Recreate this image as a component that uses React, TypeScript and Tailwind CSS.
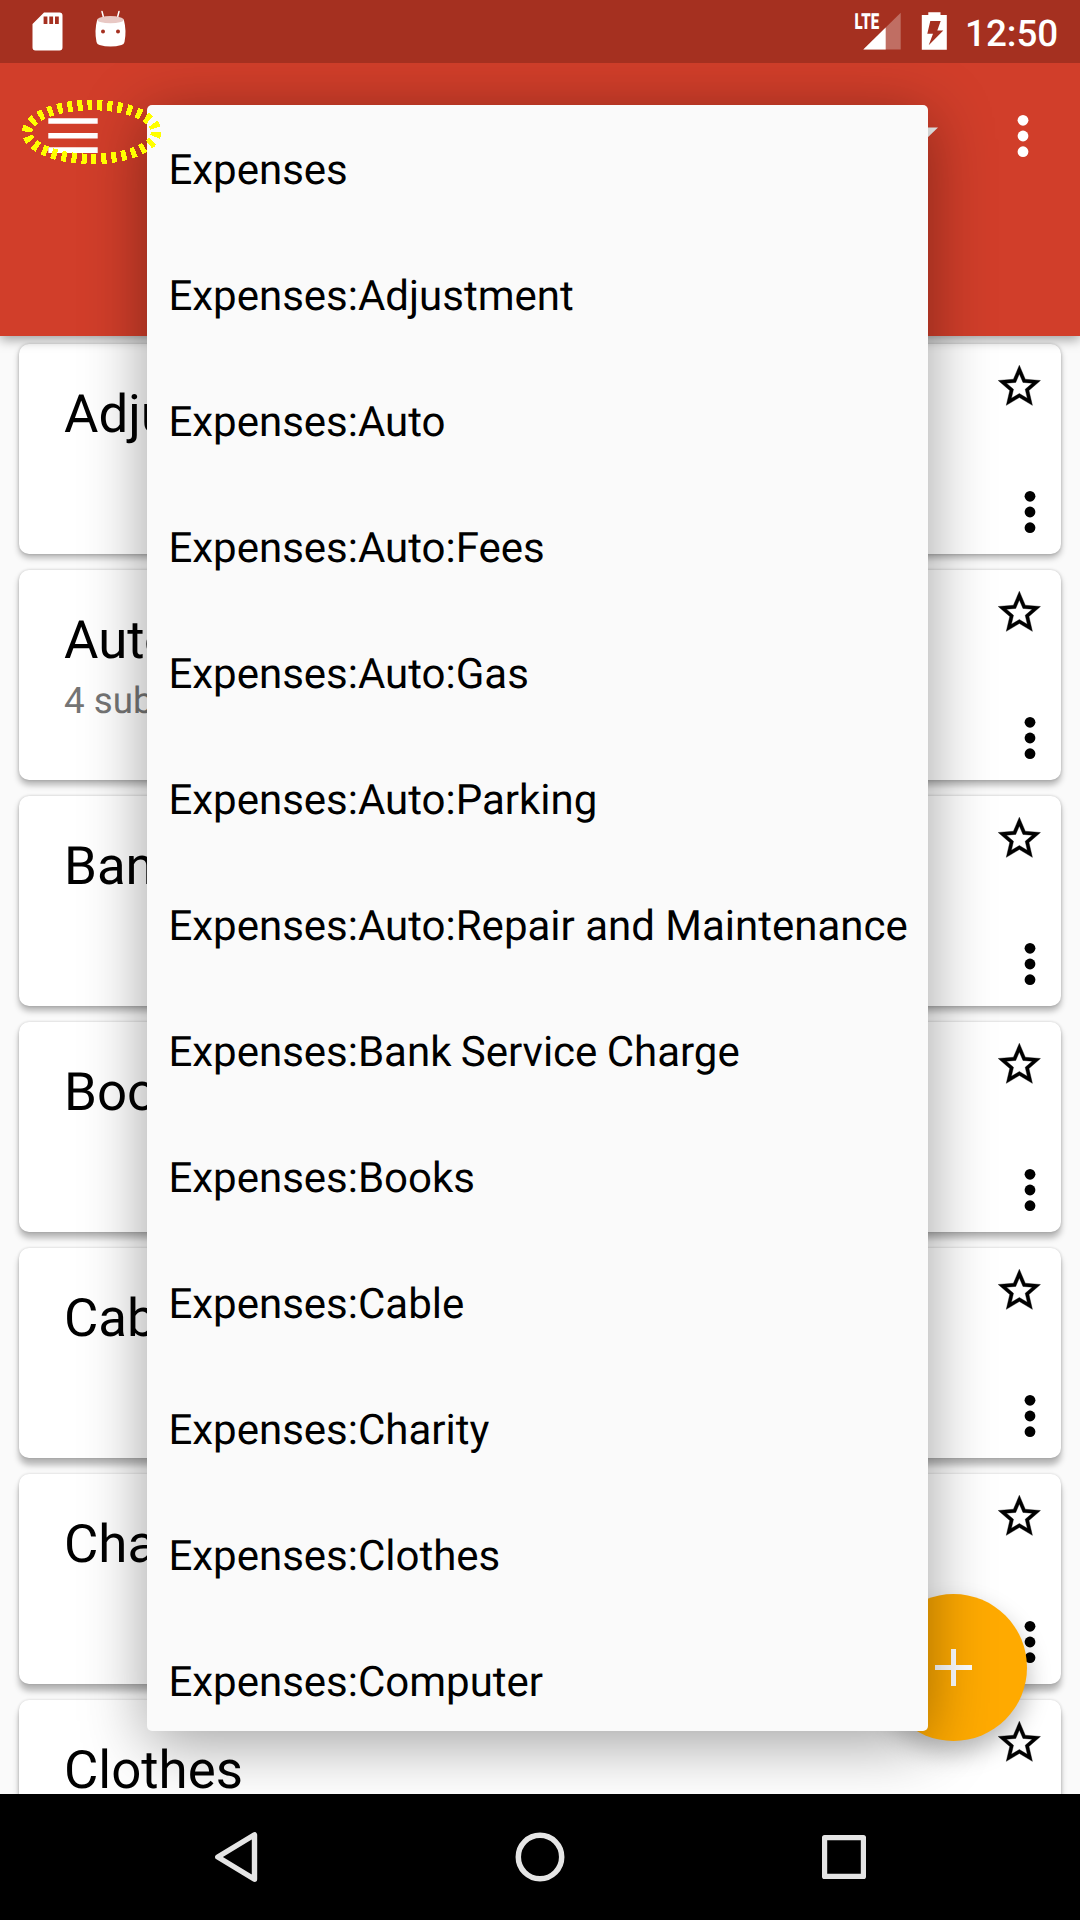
const options = [
  "Expenses",
  "Expenses:Adjustment",
  "Expenses:Auto",
  "Expenses:Auto:Fees",
  "Expenses:Auto:Gas",
  "Expenses:Auto:Parking",
  "Expenses:Auto:Repair and Maintenance",
  "Expenses:Bank Service Charge",
  "Expenses:Books",
  "Expenses:Cable",
  "Expenses:Charity",
  "Expenses:Clothes",
  "Expenses:Computer",
];

const accounts: { name: string; sub?: string }[] = [
  { name: "Adjustment" },
  { name: "Auto", sub: "4 sub-accounts" },
  { name: "Bank Service Charge" },
  { name: "Books" },
  { name: "Cable" },
  { name: "Charity" },
  { name: "Clothes" },
];

function Dots({ className }: { className: string }) {
  return (
    <svg viewBox="0 0 12 44" className={`h-[44px] w-[12px] ${className}`} fill="currentColor">
      <circle cx="6" cy="6.3" r="5.4" />
      <circle cx="6" cy="22" r="5.4" />
      <circle cx="6" cy="37.7" r="5.4" />
    </svg>
  );
}

function Star() {
  return (
    <svg viewBox="0 0 24 24" className="ml-[0.7px] size-[50.7px]" fill="currentColor" stroke="currentColor" strokeWidth="0.18">
      <path d="M22 9.24l-7.19-.62L12 2 9.19 8.63 2 9.24l5.46 4.73L5.82 21 12 17.27 18.18 21l-1.63-7.03L22 9.24zM12 15.4l-3.76 2.27 1-4.28-3.32-2.88 4.38-.38L12 6.1l1.71 4.04 4.38.38-3.32 2.88 1 4.28L12 15.4z" />
    </svg>
  );
}

function StatusBar() {
  return (
    <div className="relative z-40 flex h-[63px] shrink-0 items-center bg-[#a53020] text-white">
      <svg viewBox="0 0 140 63" className="h-[63px] w-[140px]" fill="#fff">
        <path
          fillRule="evenodd"
          d="M44 12.5h15.5a3 3 0 0 1 3 3v32a3 3 0 0 1-3 3h-24a3 3 0 0 1-3-3V24zM43.6 16.5v7.5h3.8v-7.5zM49.3 16.5v7.5h3.8v-7.5zM55 16.5v7.5h3.8v-7.5z"
        />
        <path d="M102 11.5l1.8 7M119 11.5l-1.8 7" stroke="#fff" strokeWidth="1.5" strokeLinecap="round" />
        <path
          fillRule="evenodd"
          d="M97.2 19.5Q110.5 26 123.8 19.5Q126.8 31 124.5 42Q124 44.5 121.5 45Q110.5 48 99.5 45Q97 44.5 96.5 42Q94.2 31 97.2 19.5zM103 29.5a2 2 0 1 0 0 4a2 2 0 1 0 0-4zM118 29.5a2 2 0 1 0 0 4a2 2 0 1 0 0-4z"
        />
        <ellipse cx="110.5" cy="19.7" rx="13.2" ry="3.6" fill="#e8c8c4" />
      </svg>
      <svg viewBox="0 0 100 63" className="ml-auto h-[63px] w-[100px]" fill="#fff">
        <path d="M50.7 12.7V49.6H13.3z" opacity="0.3" />
        <path d="M35.7 27.5V49.6H13.3z" />
        <text x="4.6" y="29" fontFamily="Roboto" fontWeight="900" fontSize="22" textLength="24.5" lengthAdjust="spacingAndGlyphs">
          LTE
        </text>
        <path
          fillRule="evenodd"
          d="M78.3 12.3h12.2v2.7h6.3v34.7H71.8V15h6.5zM80.3 21L77.3 33.7H83L78.7 45.3L93.3 30.5H87.3L90.7 21z"
        />
      </svg>
      <span className="mr-[22px] ml-[15px] w-[93px] pt-[5px] text-[36.75px] leading-none font-medium">12:50</span>
    </div>
  );
}

function AppBar() {
  return (
    <header className="relative z-10 flex h-[273px] shrink-0 items-start bg-[#d13e2a] pl-[48px] text-white shadow-[0_4px_11px_rgba(0,0,0,0.35)]">
      <svg viewBox="0 0 50 36" className="mt-[55px] h-[36px] w-[50px]" fill="#fff">
        <path d="M.3 .2h49.4v5.6H.3zM.3 14.9h49.4v5.6H.3zM.3 29.3h49.4v5.6H.3z" />
      </svg>
      <svg viewBox="0 0 26 13" className="mt-[64px] ml-auto h-[13px] w-[26px]" fill="#f2f2f2">
        <path d="M0 .5H26L13 13z" />
      </svg>
      <Dots className="mt-[51px] mr-[51.5px] ml-[79px]" />
    </header>
  );
}

function AccountCard({ name, sub, index }: { name: string; sub?: string; index: number }) {
  // Elevation shadows fall further below cards that sit lower on the screen.
  const boxShadow = `0 ${3.5 + index * 0.7}px 6px rgba(0,0,0,0.28), 0 0 3px rgba(0,0,0,0.18)`;
  return (
    <article className="flex h-[210px] shrink-0 justify-between rounded-[10px] bg-white text-black" style={{ boxShadow }}>
      <div className="pt-[40px] pl-[45px]">
        <div className="text-[52.8px] leading-[60px]">{name}</div>
        {sub && <div className="mt-[9px] text-[36.75px] leading-[43px] text-[#757575]">{sub}</div>}
      </div>
      <div className="flex w-[68px] flex-col items-start justify-between pt-[17px] pb-[20px]">
        <Star />
        <Dots className="ml-[31px]" />
      </div>
    </article>
  );
}

function NavBar() {
  return (
    <nav className="relative z-40 flex h-[126px] shrink-0 items-center bg-black">
      <svg viewBox="0 0 1080 126" className="h-[126px] w-[1080px]" fill="none" stroke="#e5e5e5" strokeLinejoin="round">
        <path d="M217.8 63L254.5 40.8V85.2z" strokeWidth="5.4" />
        <circle cx="540" cy="63" r="21.7" strokeWidth="5.5" />
        <rect x="824.6" y="43.6" width="38.8" height="38.8" strokeWidth="5.2" />
      </svg>
    </nav>
  );
}

export default function App() {
  return (
    <div className="relative flex h-[1920px] w-[1080px] flex-col overflow-hidden bg-[#fafafa] font-['Roboto',sans-serif] [text-rendering:geometricPrecision]">
      <StatusBar />
      <AppBar />
      <main className="flex min-h-0 flex-1 flex-col gap-[16px] overflow-hidden px-[19px] pt-[8px]">
        {accounts.map((a, i) => (
          <AccountCard key={a.name} index={i} {...a} />
        ))}
      </main>
      <NavBar />

      <button className="absolute top-[1594px] left-[880px] z-20 flex size-[147px] items-center justify-center rounded-full bg-[#ffaa00] shadow-[0_12px_24px_rgba(0,0,0,0.28)]">
        <svg viewBox="0 0 37 37" className="size-[37px]" fill="#fff">
          <path d="M16 0h5v16h16v5H21v16h-5V21H0v-5h16z" />
        </svg>
      </button>

      <ul className="absolute top-[105px] left-[147px] z-30 h-[1626px] w-[781px] overflow-hidden rounded-[5px] bg-[#fafafa] pt-[2px] pl-[21.4px] text-[42px] text-black shadow-[0_12px_64px_rgba(0,0,0,0.38)]">
        {options.map((o) => (
          <li key={o} className={`flex h-[126px] items-center whitespace-nowrap ${o.endsWith("Charge") ? "[word-spacing:-1.1px]" : ""}`}>
            {o}
          </li>
        ))}
      </ul>

      <svg viewBox="0 0 150 76" className="absolute top-[94px] left-[17px] z-50 h-[76px] w-[150px]" fill="none" shapeRendering="crispEdges">
        <ellipse cx="74.7" cy="38" rx="64.5" ry="27" stroke="#ffff00" strokeWidth="10.5" strokeDasharray="5 5" />
      </svg>
    </div>
  );
}
